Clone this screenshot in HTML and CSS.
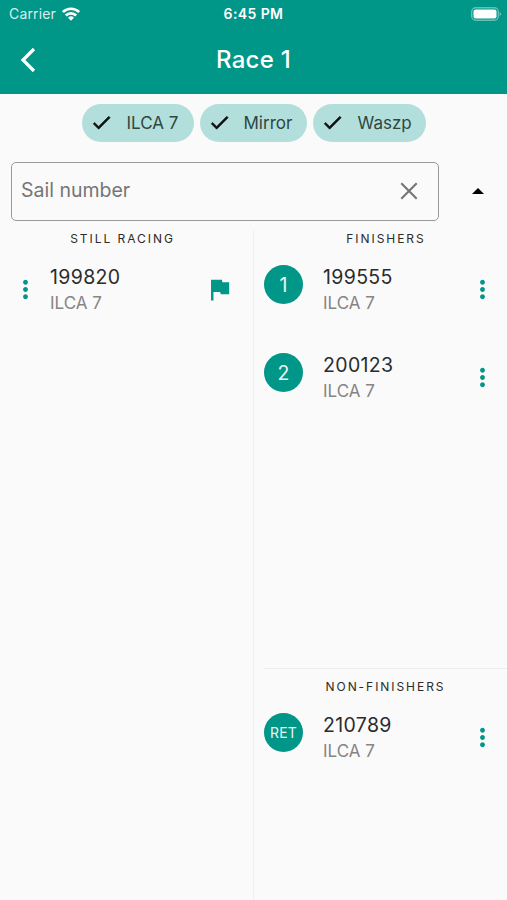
FILE: index.html
```html
<!DOCTYPE html>
<html lang="en">
<head>
    <meta charset="UTF-8">
    <title>Race 1</title>
    <link rel="stylesheet" href="styles.css">
</head>
<body>

<svg class="symbols">
    <symbol id="check" viewBox="0 0 24 24"><path d="M9 16.17L4.83 12l-1.42 1.41L9 19 21 7l-1.41-1.41z"/></symbol>
    <symbol id="dots" viewBox="0 0 24 24"><path d="M12 8c1.1 0 2-.9 2-2s-.9-2-2-2-2 .9-2 2 .9 2 2 2zm0 2c-1.1 0-2 .9-2 2s.9 2 2 2 2-.9 2-2-.9-2-2-2zm0 6c-1.1 0-2 .9-2 2s.9 2 2 2 2-.9 2-2-.9-2-2-2z"/></symbol>
</svg>

<header>
    <div class="status-bar">
        <div class="carrier">
            <span>Carrier</span>
            <svg width="18" height="14" viewBox="0 0 18 14" fill="none" stroke="#fff" stroke-width="2.7">
                <path d="M.9 5.1a11.5 11.5 0 0 1 16.2 0M3.8 8.5a7.4 7.4 0 0 1 10.4 0"/>
                <path d="M9 13.8L6 10.8a4.3 4.3 0 0 1 6 0z" fill="#fff" stroke="none"/>
            </svg>
        </div>
        <span class="time">6:45 PM</span>
        <div class="battery">
            <svg width="31" height="14" viewBox="0 0 31 14">
                <rect x=".7" y=".7" width="26.6" height="12.6" rx="4" fill="none" stroke="#fff" stroke-opacity=".4" stroke-width="1.4"/>
                <rect x="2.5" y="2.5" width="23" height="9" rx="2" fill="#fff"/>
                <path d="M28.7 5v4c1.7-.6 1.7-3.4 0-4z" fill="#fff" fill-opacity=".5"/>
            </svg>
        </div>
    </div>
    <nav>
        <svg class="back" width="16" height="26" viewBox="0 0 16 26" fill="none" stroke="#fff" stroke-width="3.2"><path d="M14 2L3 13l11 11"/></svg>
        <h1>Race 1</h1>
    </nav>
</header>

<div class="chips">
    <div class="chip ilca"><svg><use href="#check"/></svg><span>ILCA 7</span></div>
    <div class="chip mirror"><svg><use href="#check"/></svg><span>Mirror</span></div>
    <div class="chip waszp"><svg><use href="#check"/></svg><span>Waszp</span></div>
</div>

<div class="search">
    <div class="field">
        <span>Sail number</span>
        <svg width="18" height="18" viewBox="0 0 18 18" stroke="#757575" stroke-width="2.1"><path d="M1.3 1.3l15.4 15.4M16.7 1.3L1.3 16.7"/></svg>
    </div>
    <svg class="arrow" width="12" height="6" viewBox="0 0 12 6"><path d="M0 6l6-6 6 6z"/></svg>
</div>

<main>
    <section class="racing">
        <h2>STILL RACING</h2>
        <div class="row">
            <svg class="dots"><use href="#dots"/></svg>
            <div class="boat">
                <div class="number">199820</div>
                <div class="type">ILCA 7</div>
            </div>
            <svg class="flag" viewBox="0 0 24 24"><path d="M14.4 6L14 4H5v17h2v-7h5.6l.4 2h7V6z"/></svg>
        </div>
    </section>

    <div class="results">
        <section class="finishers">
            <h2>FINISHERS</h2>
            <div class="row">
                <div class="place">1</div>
                <div class="boat">
                    <div class="number">199555</div>
                    <div class="type">ILCA 7</div>
                </div>
                <svg class="dots"><use href="#dots"/></svg>
            </div>
            <div class="row">
                <div class="place">2</div>
                <div class="boat">
                    <div class="number">200123</div>
                    <div class="type">ILCA 7</div>
                </div>
                <svg class="dots"><use href="#dots"/></svg>
            </div>
        </section>
        <section class="non-finishers">
            <h2>NON-FINISHERS</h2>
            <div class="row">
                <div class="place code">RET</div>
                <div class="boat">
                    <div class="number">210789</div>
                    <div class="type">ILCA 7</div>
                </div>
                <svg class="dots"><use href="#dots"/></svg>
            </div>
        </section>
    </div>
</main>

</body>
</html>
```
FILE: styles.css
```css
* {
    box-sizing: border-box;
}

body {
    margin: 0;
    height: 900px;
    display: flex;
    flex-direction: column;
    overflow: hidden;
    background: #fafafa;
    color: #2b2b2b;
    font-family: Inter, "Liberation Sans", sans-serif;
}

svg {
    display: block;
    flex-shrink: 0;
}

.symbols {
    display: none;
}

header {
    height: 94px;
    background: #009688;
    color: #fff;
}

.status-bar {
    height: 27px;
    padding: 0 7px 0 9px;
    display: grid;
    grid-template-columns: 1fr auto 1fr;
    align-items: center;
    font-size: 14px;
}

.carrier {
    display: flex;
    align-items: center;
    gap: 6px;
    color: #d9efed;
    letter-spacing: 0.15px;
}

.time {
    margin-right: 2px;
    font-weight: 600;
    letter-spacing: 0.4px;
}

.battery {
    justify-self: end;
    margin-right: -2px;
}

nav {
    height: 66px;
    padding: 0 20px;
    display: grid;
    grid-template-columns: 16px 1fr 16px;
    align-items: center;
}

h1 {
    margin: -2px 0 0;
    text-align: center;
    font-size: 24px;
    font-weight: 500;
    letter-spacing: 0.3px;
}

.chips {
    display: flex;
    justify-content: center;
    gap: 6px;
    padding-top: 10px;
}

.chip {
    height: 38px;
    padding-left: 8px;
    display: flex;
    align-items: center;
    gap: 13px;
    border-radius: 19px;
    background: #b2dfdb;
    color: #2f4643;
    font-size: 17px;
}

.chip svg {
    width: 23px;
    height: 23px;
    margin-top: -1px;
    fill: #111;
    stroke: #111;
    stroke-width: 0.7;
}

.ilca {
    width: 112px;
}

.ilca span {
    margin-left: 1px;
}

.mirror {
    width: 107px;
}

.waszp {
    width: 113px;
}

.waszp span {
    margin-left: 1px;
}

.search {
    display: flex;
    align-items: center;
    padding: 20px 23px 0 11px;
}

.field {
    width: 428px;
    height: 59px;
    padding: 0 20px 1px 9px;
    display: flex;
    align-items: center;
    justify-content: space-between;
    border: 1px solid #9a9a9a;
    border-radius: 5px;
    color: #757575;
    font-size: 19.5px;
}

.field span {
    margin-top: -2px;
}

.arrow {
    margin-left: auto;
    margin-top: -2px;
}

main {
    flex: 1;
    display: flex;
    padding-top: 9px;
}

h2 {
    margin: 0;
    height: 16px;
    line-height: 18px;
    text-align: center;
    font-size: 12px;
    font-weight: 400;
    letter-spacing: 1.95px;
}

.racing {
    width: 254px;
    padding-right: 8px;
    border-right: 1px solid #f0f0f0;
}

.results {
    flex: 1;
    padding-left: 10px;
    display: flex;
    flex-direction: column;
}

.finishers {
    flex: 1;
}

.finishers h2 {
    padding-left: 1px;
}

.non-finishers {
    height: 232px;
    padding-top: 9px;
    border-top: 1px solid #eee;
}

.row {
    height: 88px;
    padding: 16px 10px 0 0;
    display: flex;
}

.racing .row {
    padding-right: 11px;
    padding-left: 11px;
}

.place {
    width: 39px;
    height: 39px;
    margin-top: 3px;
    display: flex;
    align-items: center;
    justify-content: center;
    border-radius: 50%;
    background: #009688;
    color: #e8f5f4;
    font-size: 19.5px;
}

.code {
    padding-bottom: 1px;
    font-size: 14px;
    letter-spacing: 0.2px;
}

.boat {
    flex: 1;
    margin-left: 20px;
}

.racing .boat {
    margin-left: 10px;
}

.number {
    line-height: 31px;
    font-size: 19.5px;
    letter-spacing: 0.35px;
}

.type {
    line-height: 21px;
    color: #858585;
    font-size: 17px;
}

.dots,
.flag {
    width: 29px;
    height: 29px;
    margin-top: 13px;
    fill: #009688;
}
```
